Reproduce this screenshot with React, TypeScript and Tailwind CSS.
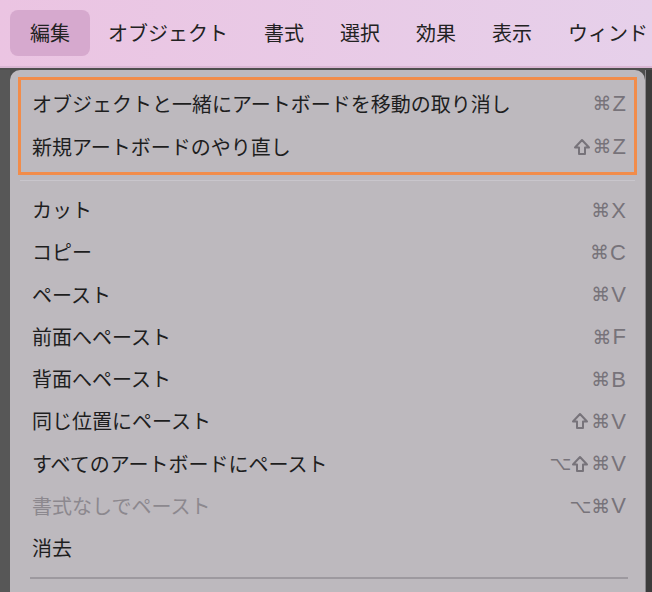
import React from "react"

const font = { fontFamily: '"Noto Sans CJK JP", "Noto Sans", sans-serif' }

const menus = ["オブジェクト", "書式", "選択", "効果", "表示", "ウィンド"]

type Item = { label: string; keys: string; disabled?: boolean }

const boxed: Item[] = [
  { label: "オブジェクトと一緒にアートボードを移動の取り消し", keys: "⌘Z" },
  { label: "新規アートボードのやり直し", keys: "⇧⌘Z" },
]

const items: Item[] = [
  { label: "カット", keys: "⌘X" },
  { label: "コピー", keys: "⌘C" },
  { label: "ペースト", keys: "⌘V" },
  { label: "前面へペースト", keys: "⌘F" },
  { label: "背面へペースト", keys: "⌘B" },
  { label: "同じ位置にペースト", keys: "⇧⌘V" },
  { label: "すべてのアートボードにペースト", keys: "⌥⇧⌘V" },
  { label: "書式なしでペースト", keys: "⌥⌘V", disabled: true },
  { label: "消去", keys: "" },
]

// outlined shift arrow
const Shift = () => (
  <svg width="18" height="18" viewBox="0 0 18 18" className="mr-[2px]">
    <path
      d="M9 2 L16 9.5 H12 V16 H6 V9.5 H2 Z"
      fill="none"
      stroke="#77737a"
      strokeWidth="2"
      strokeLinejoin="round"
    />
  </svg>
)

const Keys = ({ keys }: { keys: string }) => (
  <span
    className="flex items-center text-[20px] text-[#77737a]"
    style={{ fontFamily: '"DejaVu Sans", "Liberation Sans", sans-serif' }}
  >
    {keys.split("").map((k, i) =>
      k === "⇧" ? (
        <Shift key={i} />
      ) : (
        <span
          key={i}
          className={
            /[A-Z]/.test(k)
              ? "font-['Liberation_Sans'] text-[22px] ml-[1px]"
              : "text-[19px]"
          }
        >
          {k}
        </span>
      )
    )}
  </span>
)

const Row = ({ item, h }: { item: Item; h: string }) => (
  <div className={`flex items-center justify-between ${h}`}>
    <span className={`text-[20px] ${item.disabled ? "text-[#8c888e]" : "text-[#1e1e1e]"}`}>
      {item.label}
    </span>
    <Keys keys={item.keys} />
  </div>
)

export default function App() {
  return (
    <div className="w-[652px] h-[592px] overflow-hidden bg-[#4e4e4e] flex flex-col" style={font}>
      {/* MENU BAR */}
      <div className="h-[68px] shrink-0 flex items-center pl-[10px] bg-gradient-to-r from-[#ebc4e2] to-[#e6d0ea] border-b-[2px] border-[#d9b6d3] whitespace-nowrap overflow-hidden">
        <div className="h-[46px] px-[20px] flex items-center rounded-[8px] bg-[#d6a9ce] text-[20px] text-[#222]">
          編集
        </div>
        {menus.map((m) => (
          <div key={m} className="px-[18px] text-[20px] text-[#222]">
            {m}
          </div>
        ))}
      </div>

      {/* BODY */}
      <div className="flex flex-1 pt-[2px]">
        <div className="w-[10px] shrink-0 bg-[#575757]" />
        <div className="flex-1 bg-[#bdb9be] rounded-t-[10px] pt-[7px] px-[8px] flex flex-col">
          <div className="border-[3px] border-[#f28c4a] pt-[2px] pb-[4px] pl-[11px] pr-[8px]">
            {boxed.map((it) => (
              <Row key={it.label} item={it} h="h-[43px]" />
            ))}
          </div>
          <div className="mt-[5px] h-[1px] bg-[#c9c6cc] mx-[2px]" />
          <div className="mt-[8px] pl-[14px] pr-[11px]">
            {items.map((it) => (
              <Row key={it.label} item={it} h="h-[42.25px]" />
            ))}
          </div>
          <div className="mt-[8px] ml-[12px] mr-[9px] h-[2px] bg-[#9d999f]" />
        </div>
        <div className="w-[7px] shrink-0 bg-[#3c3c3c] border-l border-[#8a878b]" />
      </div>
    </div>
  )
}
